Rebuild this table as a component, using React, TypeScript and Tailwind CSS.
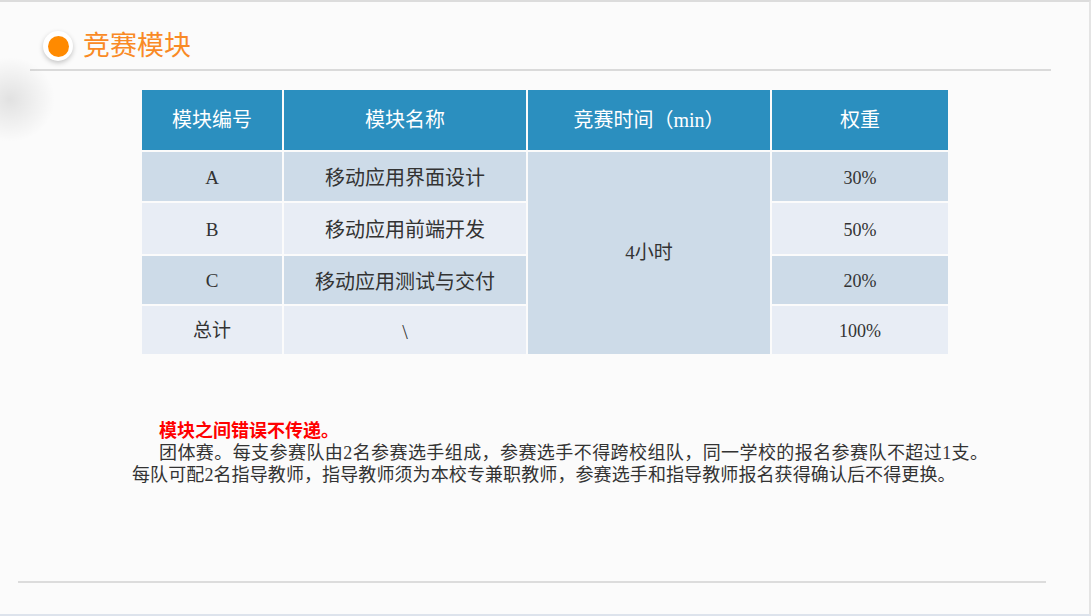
const serif = "font-['Liberation_Serif','Noto_Sans_CJK_SC',serif]";

const rows = [
  { code: "A", name: "移动应用界面设计", weight: "30%", bg: "bg-[#cddbe8]", h: "h-[49px]" },
  { code: "B", name: "移动应用前端开发", weight: "50%", bg: "bg-[#e8edf5]", h: "h-[51px]" },
  { code: "C", name: "移动应用测试与交付", weight: "20%", bg: "bg-[#cddbe8]", h: "h-[48px]" },
  { code: "总计", name: "\\", weight: "100%", bg: "bg-[#e8edf5]", h: "h-[48px]" },
];

function ModuleTable() {
  return (
    <div className="ml-[142px] mt-[19px] grid w-[806px] grid-cols-[140px_242px_242px_176px] gap-[2px]">
      {["模块编号", "模块名称", "竞赛时间（min）", "权重"].map((h) => (
        <div
          key={h}
          className="flex h-[60px] items-center justify-center bg-[#2b8fbf] text-[20px] text-white"
        >
          {h}
        </div>
      ))}
      {rows.map((r, i) => (
        <div key={r.code} className="contents">
          <div className={`flex items-center justify-center pt-[3px] ${r.h} ${r.bg} text-[19px] text-[#333]`}>
            {r.code}
          </div>
          <div className={`flex items-center justify-center pt-[3px] ${r.h} ${r.bg} text-[20px] text-[#333]`}>
            {r.name}
          </div>
          {i === 0 && (
            <div className="row-span-4 flex items-center justify-center bg-[#cddbe8] text-[19px] text-[#333]">
              4小时
            </div>
          )}
          <div className={`flex items-center justify-center pt-[3px] ${r.h} ${r.bg} text-[18px] text-[#333]`}>
            {r.weight}
          </div>
        </div>
      ))}
    </div>
  );
}

export default function App() {
  return (
    <div
      className={`relative h-[616px] w-[1091px] overflow-hidden border-t-2 border-r-2 border-b-2 border-t-[#dcdcdc] border-r-[#e4e4e4] border-b-[#dde3ec] bg-[#fbfbfb] ${serif}`}
    >
      <div className="pointer-events-none absolute left-[-35px] top-[55px] h-[85px] w-[90px] rounded-full bg-[radial-gradient(closest-side,rgba(0,0,0,0.1),rgba(0,0,0,0))]" />

      <div className="ml-[43px] mt-[29px] flex items-center gap-[10px]">
        <div className="flex h-[30px] w-[30px] items-center justify-center rounded-full bg-white shadow-[0_2px_5px_rgba(0,0,0,0.22)]">
          <div className="h-[21px] w-[21px] rounded-full bg-[#ff8a00]" />
        </div>
        <div className="text-[27px] leading-[30px] text-[#f98a25]">竞赛模块</div>
      </div>

      <div className="ml-[30px] mt-[8px] h-[2px] w-[1021px] bg-[#dadada]" />

      <ModuleTable />

      <div className="ml-[132px] mt-[66px] w-[856px] text-[18px] leading-[22px] text-[#333]">
        <div className="pl-[27px] text-[18px] font-bold text-[#ff0000]">模块之间错误不传递。</div>
        <div className="pl-[27px] text-justify [text-align-last:justify]">
          团体赛。每支参赛队由2名参赛选手组成，参赛选手不得跨校组队，同一学校的报名参赛队不超过1支。
        </div>
        <div className="whitespace-nowrap tracking-[0.1px]">
          每队可配2名指导教师，指导教师须为本校专兼职教师，参赛选手和指导教师报名获得确认后不得更换。
        </div>
      </div>

      <div className="ml-[18px] mt-[95px] h-[2px] w-[1028px] bg-[#dcdcdc]" />
    </div>
  );
}
